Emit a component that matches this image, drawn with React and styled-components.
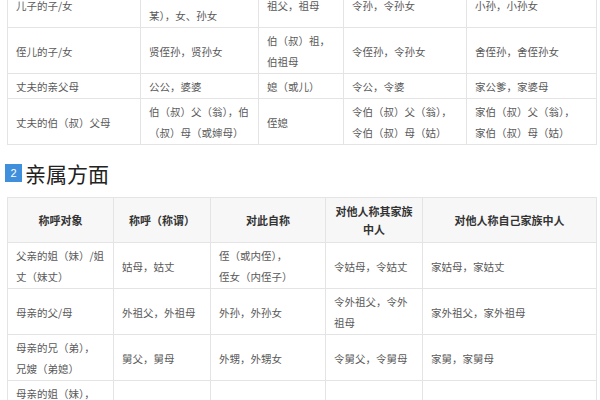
import React from 'react';
import styled, { createGlobalStyle } from 'styled-components';

const GlobalStyle = createGlobalStyle`
  html, body {
    margin: 0;
    padding: 0;
    background: #fff;
  }
  body {
    font-family: "Noto Sans CJK SC", "Noto Sans", sans-serif;
  }
  #root {
    height: 400px;
    overflow: hidden;
  }
`;

const Page = styled.div`
  margin-top: -19px;
  padding: 0 4px 0 7px;
`;

const Table = styled.table`
  width: 589px;
  table-layout: fixed;
  border-collapse: collapse;
  background: #fff;
`;

const Th = styled.th`
  border: 1px solid #e4e4e4;
  background: #f7f7f7;
  color: #333;
  font-size: 11px;
  font-weight: bold;
  line-height: 18px;
  padding: 4px 6px;
  text-align: center;
  vertical-align: middle;
`;

const Td = styled.td`
  border: 1px solid #e4e4e4;
  color: #595959;
  font-size: 10.5px;
  line-height: 21px;
  padding: 2px 7px 1px 8px;
  text-align: left;
  vertical-align: middle;
  white-space: nowrap;
  overflow: visible;
`;

const Heading = styled.h2`
  display: flex;
  align-items: center;
  gap: 3px;
  margin: 16px 0 12px -2px;
  height: 24px;
  font-size: 21px;
  font-weight: normal;
  color: #222;
  line-height: 24px;
`;

const NumBadge = styled.span`
  display: flex;
  align-items: center;
  justify-content: center;
  width: 17px;
  height: 18px;
  background: #3f8fdc;
  color: #fff;
  font-size: 11px;
  font-family: "Liberation Sans", Arial, sans-serif;
`;

const lines = (text) =>
  text.split('\n').map((t, i, arr) => (
    <React.Fragment key={i}>
      {t}
      {i < arr.length - 1 && <br />}
    </React.Fragment>
  ));

const topWidths = [133, 118, 85, 123, 130];
const topRows = [
  ['儿子的子/女', '孙：孙、孙子（孙\n某），女、孙女', '祖父，祖母', '令孙，令孙女', '小孙，小孙女'],
  ['侄儿的子/女', '贤侄孙，贤孙女', '伯（叔）祖，\n伯祖母', '令侄孙，令孙女', '舍侄孙，舍侄孙女'],
  ['丈夫的亲父母', '公公，婆婆', '媳（或儿）', '令公，令婆', '家公爹，家婆母'],
  ['丈夫的伯（叔）父母', '伯（叔）父（翁），伯\n（叔）母（或婶母）', '侄媳', '令伯（叔）父（翁），\n令伯（叔）母（姑）', '家伯（叔）父（翁），\n家伯（叔）母（姑）'],
];

const relWidths = [106, 97, 115, 97, 174];
const relHead = ['称呼对象', '称呼（称谓）', '对此自称', '对他人称其家族\n中人', '对他人称自己家族中人'];
const relRows = [
  ['父亲的姐（妹）/姐\n丈（妹丈）', '姑母，姑丈', '侄（或内侄），\n侄女（内侄子）', '令姑母，令姑丈', '家姑母，家姑丈'],
  ['母亲的父/母', '外祖父，外祖母', '外孙，外孙女', '令外祖父，令外\n祖母', '家外祖父，家外祖母'],
  ['母亲的兄（弟），\n兄嫂（弟媳）', '舅父，舅母', '外甥，外甥女', '令舅父，令舅母', '家舅，家舅母'],
  ['母亲的姐（妹），\n姐夫（妹夫）', '姨母，姨丈', '姨甥，姨甥女', '令姨父，令姨母', '家姨父，家姨母'],
];

const Cols = ({ widths }) => (
  <colgroup>
    {widths.map((w, i) => (
      <col key={i} style={{ width: w }} />
    ))}
  </colgroup>
);

export default function App() {
  return (
    <>
      <GlobalStyle />
      <Page>
        <Table>
          <Cols widths={topWidths} />
          <tbody>
            {topRows.map((row, r) => (
              <tr key={r}>
                {row.map((cell, c) => (
                  <Td key={c}>{lines(cell)}</Td>
                ))}
              </tr>
            ))}
          </tbody>
        </Table>

        <Heading>
          <NumBadge>2</NumBadge>
          亲属方面
        </Heading>

        <Table>
          <Cols widths={relWidths} />
          <thead>
            <tr>
              {relHead.map((h, i) => (
                <Th key={i}>{lines(h)}</Th>
              ))}
            </tr>
          </thead>
          <tbody>
            {relRows.map((row, r) => (
              <tr key={r}>
                {row.map((cell, c) => (
                  <Td key={c}>{lines(cell)}</Td>
                ))}
              </tr>
            ))}
          </tbody>
        </Table>
      </Page>
    </>
  );
}
